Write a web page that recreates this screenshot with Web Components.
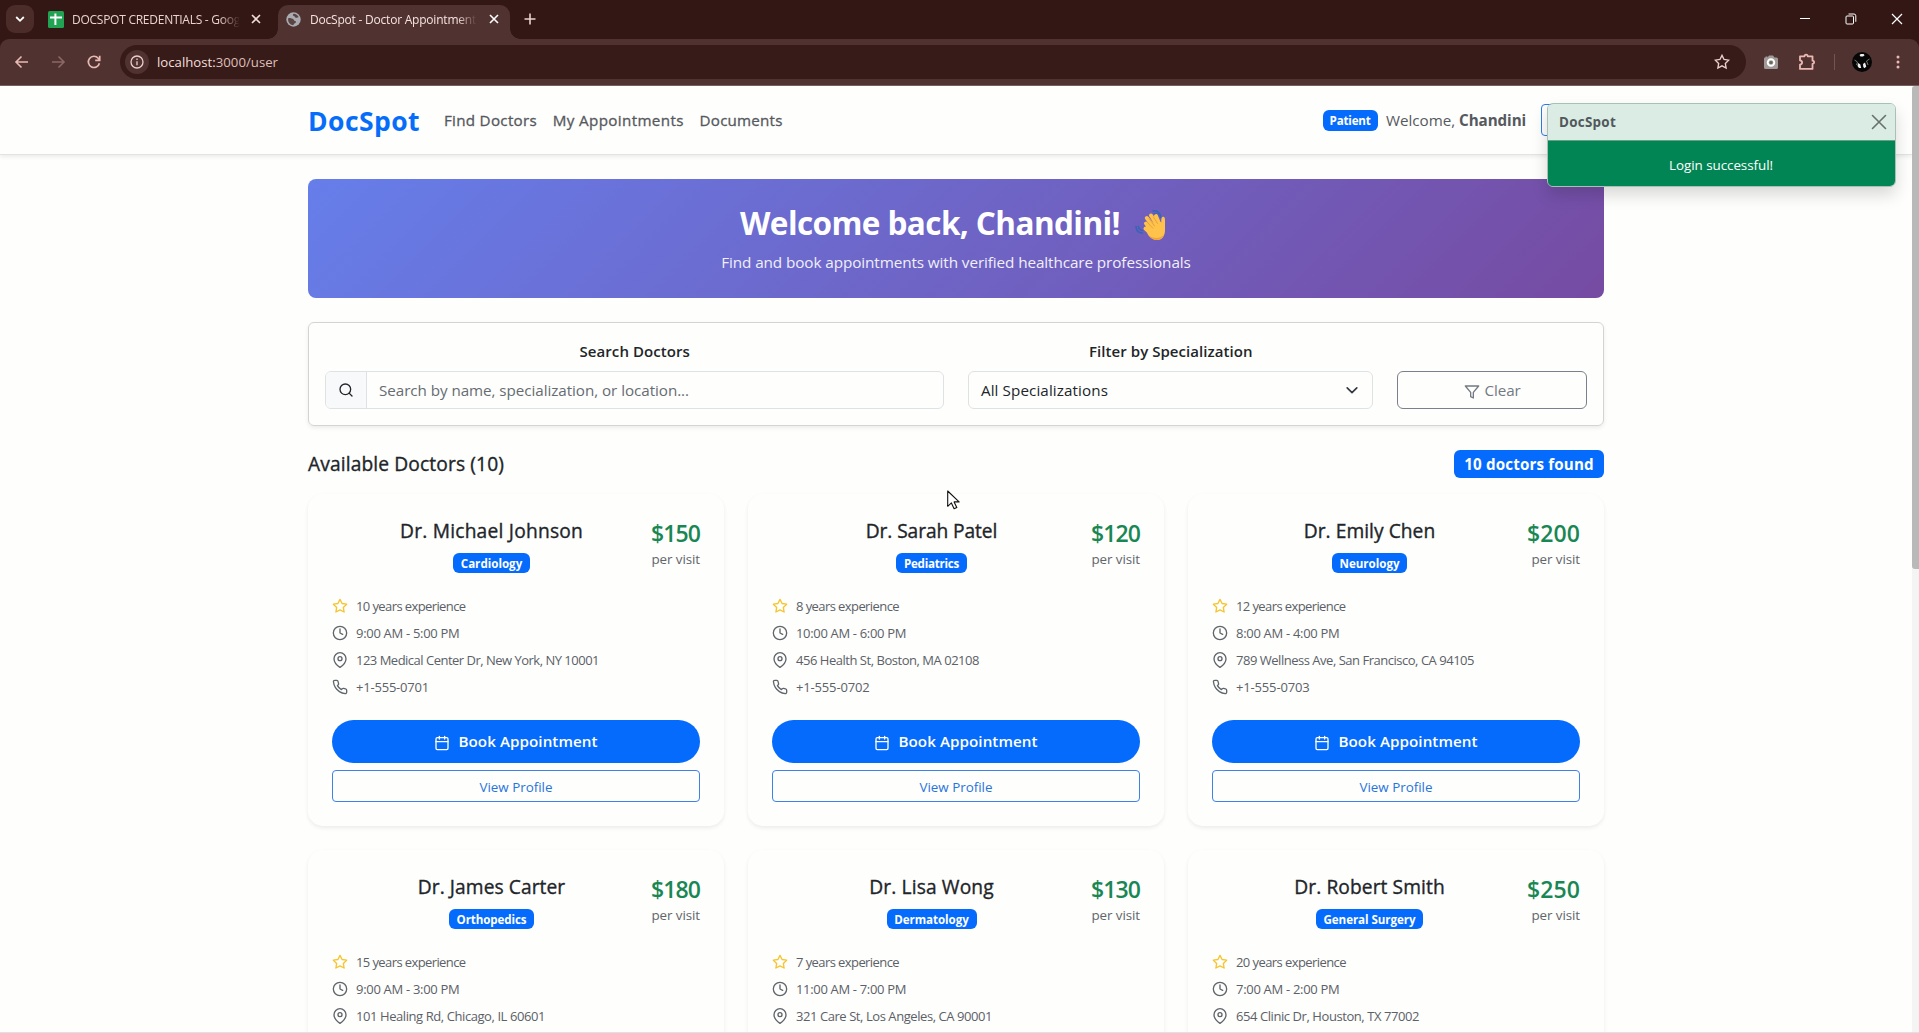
<!DOCTYPE html>
<html lang="en">
<head>
<meta charset="utf-8">
<title>DocSpot - Doctor Appointment</title>
<style>
html,body{margin:0;height:100%;overflow:hidden}
body{font-family:"Open Sans","Noto Sans",sans-serif;color:#212529;background:#fefefd}
</style>
</head>
<body>
<doc-app></doc-app>
<script>
const define=(name,css,html)=>customElements.define(name,class extends HTMLElement{
  constructor(){
    super();
    this.attachShadow({mode:'open'}).innerHTML=`<style>:host{box-sizing:border-box}*{box-sizing:border-box}svg{display:block;flex:none}${css}</style>`+(typeof html==='function'?html(this):html);
  }
});
const feather=(inner,size=16,color='currentColor',width=2)=>`<svg width="${size}" height="${size}" viewBox="0 0 24 24" fill="none" stroke="${color}" stroke-width="${width}" stroke-linecap="round" stroke-linejoin="round">${inner}</svg>`;
const STAR='<path d="M12 2l3.09 6.26L22 9.27l-5 4.87 1.18 6.88L12 17.77l-6.18 3.25L7 14.14 2 9.27l6.91-1.01z"/>';
const CLOCK='<circle cx="12" cy="12" r="10"/><path d="M12 6v6l4 2"/>';
const PIN='<path d="M21 10c0 7-9 13-9 13s-9-6-9-13a9 9 0 0 1 18 0z"/><circle cx="12" cy="10" r="3"/>';
const PHONE='<path d="M22 16.92v3a2 2 0 0 1-2.18 2 19.79 19.79 0 0 1-8.63-3.07 19.5 19.5 0 0 1-6-6 19.79 19.79 0 0 1-3.07-8.67A2 2 0 0 1 4.11 2h3a2 2 0 0 1 2 1.72c.127.96.361 1.903.7 2.81a2 2 0 0 1-.45 2.11L8.09 9.91a16 16 0 0 0 6 6l1.27-1.27a2 2 0 0 1 2.11-.45c.907.339 1.85.573 2.81.7A2 2 0 0 1 22 16.92z"/>';
const CAL='<rect x="3" y="4" width="18" height="18" rx="2"/><path d="M16 2v4M8 2v4M3 10h18"/>';

/* ---------- browser frame ---------- */
define('tab-strip',`
:host{display:flex;height:39px;background:#331714;color:#ead2ce;font-size:12px;padding:5px 0 0 6px}
.menu{width:28px;height:28px;border-radius:9px;background:#4b2c29;display:grid;place-items:center}
.tab{display:flex;align-items:center;height:28px;flex:none}
.one{width:213px;margin-left:14px}
.one svg.logo{margin-right:8px}
.txt{overflow:hidden;-webkit-mask-image:linear-gradient(90deg,#000 88%,transparent);white-space:nowrap;line-height:20px;padding-top:1px}
.two{position:relative;width:232px;height:34px;background:#503230;border-radius:10px 10px 0 0;margin-left:17px;padding:0 0 6px 8px;color:#f5e3e0}
.two:before,.two:after{content:"";position:absolute;bottom:0;width:10px;height:10px}
.two:before{left:-10px;background:radial-gradient(circle at 0 0,transparent 9.5px,#503230 10px)}
.two:after{right:-10px;background:radial-gradient(circle at 100% 0,transparent 9.5px,#503230 10px)}
.plus{margin:8px 0 0 14px}
.win{margin-left:auto;display:flex;gap:34px;padding:8px 16px 0 0;height:30px}
`,`
<div class="menu"><svg width="10" height="8" viewBox="0 0 10 8" fill="none" stroke="#fff" stroke-width="1.8"><path d="M1.2 2l3.8 3.8L8.8 2"/></svg></div>
<div class="tab one"><svg class="logo" width="16" height="17" viewBox="0 0 16 17"><rect width="16" height="17" rx="1.5" fill="#20a352"/><path d="M2 6.500h12M7.400 2.500v11.500" stroke="#fff" stroke-width="2"/></svg>
<div class="txt" style="width:168px"><fit-text w="168">DOCSPOT CREDENTIALS - Goog</fit-text></div>
<svg style="margin-left:11px" width="10" height="10" viewBox="0 0 10 10" stroke="#f0dcd8" stroke-width="1.600"><path d="M1 1l8 8M9 1l-8 8"/></svg></div>
<div class="tab two"><svg width="15" height="15" viewBox="0 0 15 15"><circle cx="7.500" cy="7.500" r="7.200" fill="#a9abb0"/><path d="M2.200 6.300c1.400-.6 3 .4 4.300.5 1.600.2 1.300 2.200 2.600 2.300 1.300.2 1 1.700-.1 2.200-.9.400-1.300 1-1.600 1.900-2.900 0-5.200-2.500-5.300-5.400zM7.500 1.700c-1 .9-.8 1.900.5 2.300 1.200.4.600 1.700 2 1.800 1.300.1 1.700-.6 2.700-.6-.9-2-2.800-3.500-5.200-3.500z" fill="#5b4544"/></svg>
<div class="txt" style="width:167px;margin-left:9px"><fit-text w="166">DocSpot - Doctor Appointment</fit-text></div>
<svg style="margin-left:12px" width="10" height="10" viewBox="0 0 10 10" stroke="#fff" stroke-width="1.600"><path d="M1 1l8 8M9 1l-8 8"/></svg></div>
<svg class="plus" width="12" height="12" viewBox="0 0 12 12" stroke="#ead2ce" stroke-width="1.600"><path d="M6 .5v11M.5 6h11"/></svg>
<div class="win"><svg width="12" height="12" viewBox="0 0 12 12" stroke="#fff"><path d="M1 5.500h10"/></svg>
<svg width="12" height="12" viewBox="0 0 12 12" stroke="#fff" fill="none"><rect x="1" y="3" width="7.500" height="8" rx="1"/><path d="M3.500 1h5.500a1.800 1.800 0 0 1 1.800 1.800v6"/></svg>
<svg width="12" height="12" viewBox="0 0 12 12" stroke="#fff" stroke-width="1.200"><path d="M1 1l10 10M11 1L1 11"/></svg></div>`);

define('tool-bar',`
:host{display:block;height:47px;background:#331714}
.bar{height:47px;background:#503230;border-radius:9px 9px 0 0;border-bottom:1px solid #76605e;display:flex;align-items:center;padding:0 19px 0 14px}
.nav{display:flex;gap:20px;width:106px}
.omni{height:34px;width:1626px;flex:none;border-radius:17px;background:#371b18;display:flex;align-items:center;padding:0 16px 0 5px;color:#f3dfdc;font-size:13.200px}
.info{width:24px;height:24px;border-radius:50%;background:#503230;display:grid;place-items:center;margin-right:8px}
.omni .s{margin-left:auto}
.right{display:flex;align-items:center;margin-left:auto}
`,`
<div class="bar"><div class="nav">
<svg width="16" height="16" viewBox="0 0 16 16" fill="none" stroke="#e9b9b3" stroke-width="1.600"><path d="M14 8H2M7.500 2.500L2 8l5.500 5.500"/></svg>
<svg width="16" height="16" viewBox="0 0 16 16" fill="none" stroke="#8c6864" stroke-width="1.600"><path d="M2 8h12M8.500 2.500L14 8l-5.500 5.500"/></svg>
<svg width="16" height="16" viewBox="0 0 16 16" fill="none" stroke="#e9b9b3" stroke-width="1.700"><path d="M13.400 9.200A5.600 5.600 0 1 1 12.200 4.200L13.500 6"/><path d="M13.700 1.800V6.300H9.200"/></svg>
</div><div class="omni"><div class="info"><svg width="14" height="14" viewBox="0 0 14 14" fill="none" stroke="#ecd0cc" stroke-width="1.300"><circle cx="7" cy="7" r="6"/><path d="M7 6.200V10.200M7 3.600V5"/></svg></div>
<fit-text w="121">localhost:<span style="color:#dfbfba">3000/user</span></fit-text>
<svg class="s" width="16" height="16" viewBox="0 0 24 24" fill="none" stroke="#ecd0cc" stroke-width="2">${STAR}</svg></div>
<div class="right"><svg width="16" height="16" viewBox="0 0 16 16"><path d="M1.500 3.500h1v-1h2v1L6 1.500h4L11.500 3.500h2A1.500 1.500 0 0 1 15 5v8.500a1.500 1.500 0 0 1-1.500 1.500h-11A1.500 1.500 0 0 1 1 13.500v-9z" fill="#a09a98"/><circle cx="8" cy="8.500" r="3.300" fill="none" stroke="#fff" stroke-width="1.900"/><circle cx="8" cy="8.500" r="1.500" fill="#665"/></svg>
<svg style="margin-left:19px" width="18" height="18" viewBox="0 0 18 18" fill="none" stroke="#eab9b4" stroke-width="1.800" stroke-linejoin="round"><path d="M2 3.300h4.500a1.600 1.600 0 0 1 3.200 0H14.500v4.400a1.600 1.600 0 0 1 0 3.200v5H2v-4.300c2.800-.4 2.800-3.800 0-4.200z"/></svg>
<div style="width:1px;height:16px;background:#76534f;margin-left:18px"></div>
<svg style="margin-left:17px" width="20" height="20" viewBox="0 0 20 20"><circle cx="10" cy="10" r="10" fill="#060606"/><path d="M7.500 3l1.400-1h2.700l1 1.300-1.600 1.200H8.500zM6 11l2.200 1.200 1 3.800H7l-1.500-2zM11 12l2-1.500 1.300 4-1.800 1.800-1.200-1.300z" fill="#eee"/><path d="M2.500 8l3 2-1 3M17.500 7l-3 2 1.500 4" stroke="#777" fill="none"/></svg>
<svg style="margin-left:24px" width="4" height="14" viewBox="0 0 4 14" fill="#eab9b4"><circle cx="2" cy="2" r="1.500"/><circle cx="2" cy="7" r="1.500"/><circle cx="2" cy="12" r="1.500"/></svg></div></div>`);

/* ---------- page ---------- */
define('blue-badge',`
:host{display:inline-flex;align-items:center;justify-content:center;background:#046bfc;color:#fff;font-weight:700;font-size:11.600px;border-radius:6px;height:20.500px;padding-top:1.500px;line-height:16px;flex:none}
`,`<slot></slot>`);

define('nav-bar',`
:host{display:flex;align-items:center;height:69px;padding:0 0 0 308px;border-bottom:1px solid #e2e4e4;box-shadow:0 2px 4px rgba(0,0,0,.075);color:#56595d}
.brand{font-weight:700;font-size:26.500px;color:#066dfa;width:136px;line-height:36px;padding-top:1px}
.links{display:flex;gap:15.800px;font-weight:500;font-size:15.200px;-webkit-text-stroke:.3px #56595d}
.user{display:flex;align-items:center;margin-left:540px;font-size:15.200px}
.out{width:100px;height:32px;margin-left:15px;border:1px solid #2f7ae8;border-radius:4px}
`,`
<div class="brand"><fit-text w="112">DocSpot</fit-text></div>
<div class="links"><fit-text w="93">Find Doctors</fit-text><fit-text w="131">My Appointments</fit-text><fit-text w="83">Documents</fit-text></div>
<div class="user"><blue-badge style="width:55px;margin-top:1px"><fit-text w="41">Patient</fit-text></blue-badge>
<fit-text w="69" style="margin-left:8.500px">Welcome,</fit-text><fit-text w="67" style="font-weight:700;margin-left:4px">Chandini</fit-text><div class="out"></div></div>`);

define('welcome-banner',`
:host{display:flex;flex-direction:column;align-items:center;height:118.500px;border-radius:8px;background:linear-gradient(135deg,#667eea 0%,#764ba2 100%);color:#fff;padding-top:23px}
.h{display:flex;align-items:center;font-weight:700;font-size:31.500px;line-height:42px;height:42px;padding-right:6px}
.s{font-size:15.300px;line-height:22px;margin-top:6.500px;color:#f0effa}
`,`
<div class="h"><fit-text w="380">Welcome back, Chandini!</fit-text>
<svg style="margin:3px 0 0 14px" width="32" height="33" viewBox="0 0 32 33" fill="none">
<path d="M19 3c3.500-1 7.500 1.500 7.500 6.500M20.500 5.500c2 0 3.500 1.200 3.700 3.500M2 18.500c.3 4 2.500 6.500 6.500 6.500M4.500 18.500c.3 2.300 1.700 3.800 4 4" stroke="#3565b4" stroke-width="1.600" stroke-linecap="round"/>
<path d="M12 15.500l7 8M12.800 10l8.200 10M17 7.500l6.500 10M22 8l3.500 9M11.500 20.500l7 6.500" stroke="#ffc24b" stroke-width="4" stroke-linecap="round"/>
<path d="M15 20l10-7 2.300 1.500c-.2-3 .1-5.500 1.500-5.800 1.700-.3 2.200 1.300 2.200 3.300v10c0 6-3 10-7.500 10-5 0-9.500-3.500-10.500-8z" fill="#ffc24b"/>
<path d="M13.500 14.500l5.300 5.700M15 10.500l5.500 7.500M19.500 9l4 6.500" stroke="#df9a38" stroke-width=".8" stroke-linecap="round"/><path d="M14.500 27c3.500 3.500 11.500 4.500 15.500-.5-1.200 3.700-3.800 5.500-7 5.500-3.500 0-6.500-2-8.500-5z" fill="#f2a43a"/></svg></div>
<div class="s"><fit-text w="469.500">Find and book appointments with verified healthcare professionals</fit-text></div>`);

define('search-panel',`
:host{display:flex;gap:24px;height:104px;border:1px solid #d3d5d5;border-radius:6px;box-shadow:0 2px 4px rgba(0,0,0,.075);padding:16px 16px 0;margin-top:24.500px}
.col{display:flex;flex-direction:column;align-items:stretch}
.lab{font-weight:600;font-size:15px;line-height:24px;height:32px;text-align:center}
.box{display:flex;align-items:center;height:38px;border:1px solid #dfe2e5;border-radius:6px;font-size:15.200px;overflow:hidden}
.ic{width:41px;height:38px;background:#f8f9fa;border-right:1px solid #dfe2e5;display:grid;place-items:center}
.clear{justify-content:center;gap:5px;border-color:#7a808c;color:#737a82;margin-top:32px}
`,`
<div class="col" style="width:620px"><div class="lab"><fit-text w="110.500">Search Doctors</fit-text></div>
<div class="box"><div class="ic">${feather('<circle cx="11" cy="11" r="8"/><path d="M21 21l-4.350-4.350"/>')}</div><fit-text w="310" style="color:#666c72;margin-left:12px">Search by name, specialization, or location...</fit-text></div></div>
<div class="col" style="width:405px"><div class="lab"><fit-text w="163.500">Filter by Specialization</fit-text></div>
<div class="box" style="padding:0 13px 0 11.500px;justify-content:space-between"><fit-text w="127">All Specializations</fit-text><svg width="14" height="14" viewBox="0 0 16 16" fill="none" stroke="#343a40" stroke-width="1.900" stroke-linecap="round" stroke-linejoin="round"><path d="M2.500 5.500l5.500 5.500 5.500-5.500"/></svg></div></div>
<div class="col" style="width:190px"><div class="box clear"><div style="padding-top:3px">${feather('<path d="M22 3H2l8 9.460V19l4 2v-8.540z"/>')}</div><fit-text w="36">Clear</fit-text></div></div>`);

define('result-head',`
:host{display:flex;justify-content:space-between;align-items:center;height:28px;margin:23.500px 0 16.500px}
blue-badge{width:150px;height:28px;font-size:15.200px;padding:0}
h2{margin:0;font-size:19.200px;line-height:24px;font-weight:500;-webkit-text-stroke:.35px currentColor;padding-top:1px}
`,`<h2><fit-text w="196">Available Doctors (10)</fit-text></h2><blue-badge><fit-text w="129.500">10 doctors found</fit-text></blue-badge>`);

define('detail-row',`
:host{display:flex;align-items:center;height:26.900px;gap:8px;font-size:13px;line-height:20px;color:#5b6167}
`,el=>({star:feather(STAR,16,'#f5c530'),clock:feather(CLOCK,16,'#5f656b'),pin:feather(PIN,16,'#5f656b'),phone:feather(PHONE,16,'#5f656b')})[el.getAttribute('icon')]+'<slot></slot>');

define('doctor-card',`
:host{display:block;width:416px;height:332px;border-radius:15px;box-shadow:0 2px 4px rgba(0,0,0,.075);padding:24px;flex:none}
.head{display:flex;height:75px}
.who{flex:1;display:flex;flex-direction:column;align-items:center}
.name{font-size:19.200px;font-weight:500;line-height:24px;padding-top:1px;height:34.500px;-webkit-text-stroke:.35px currentColor}
.fee{display:flex;flex-direction:column;align-items:flex-end;color:#5f656b;font-size:13.400px;line-height:20px}
.fee b{color:#198754;font-weight:600;font-size:23px;line-height:30px;height:30.500px}
.book{display:flex;align-items:center;justify-content:center;gap:8px;height:42.500px;border-radius:22px;background:#046bfc;color:#fff;font-weight:600;font-size:15.200px;margin-top:19.500px}
.view{display:flex;align-items:center;justify-content:center;height:32px;border:1px solid #3c82e8;border-radius:4px;margin-top:7.500px;padding-top:1px;color:#2874dc;font-size:13.400px}
`,el=>{const d=DOCTORS[el.getAttribute('doctor')];const f=p=>`<fit-text w="${p[1]}">${p[0]}</fit-text>`;
return `<div class="head"><div class="who"><div class="name">${f(d.name)}</div><blue-badge style="width:${d.spec[1]+15.5}px">${f(d.spec)}</blue-badge></div>
<div class="fee"><b>${f(d.fee)}</b><fit-text w="48.500">per visit</fit-text></div></div>
<detail-row icon="star">${f(d.exp)}</detail-row><detail-row icon="clock">${f(d.hours)}</detail-row><detail-row icon="pin">${f(d.addr)}</detail-row>${d.tel?`<detail-row icon="phone">${f(d.tel)}</detail-row>
<div class="book"><div style="padding-top:4px">${feather(CAL,16)}</div><fit-text w="139">Book Appointment</fit-text></div><div class="view"><fit-text w="73">View Profile</fit-text></div>`:''}`});
const DOCTORS=[
{name:['Dr. Michael Johnson',183],spec:['Cardiology',61.5],fee:['$150',49],exp:['10 years experience',109.5],hours:['9:00 AM - 5:00 PM',103.5],addr:['123 Medical Center Dr, New York, NY 10001',243],tel:['+1-555-0701',73]},
{name:['Dr. Sarah Patel',131.5],spec:['Pediatrics',55],fee:['$120',49],exp:['8 years experience',103],hours:['10:00 AM - 6:00 PM',110],addr:['456 Health St, Boston, MA 02108',183],tel:['+1-555-0702',73.5]},
{name:['Dr. Emily Chen',131.5],spec:['Neurology',60],fee:['$200',53],exp:['12 years experience',109.5],hours:['8:00 AM - 4:00 PM',103.5],addr:['789 Wellness Ave, San Francisco, CA 94105',238],tel:['+1-555-0703',73.5]},
{name:['Dr. James Carter',147.5],spec:['Orthopedics',70],fee:['$180',49],exp:['15 years experience',109.5],hours:['9:00 AM - 3:00 PM',103.5],addr:['101 Healing Rd, Chicago, IL 60601',189]},
{name:['Dr. Lisa Wong',124.5],spec:['Dermatology',74.5],fee:['$130',49],exp:['7 years experience',103],hours:['11:00 AM - 7:00 PM',110],addr:['321 Care St, Los Angeles, CA 90001',196]},
{name:['Dr. Robert Smith',150.5],spec:['General Surgery',92],fee:['$250',53],exp:['20 years experience',110],hours:['7:00 AM - 2:00 PM',103.5],addr:['654 Clinic Dr, Houston, TX 77002',183]}];

define('toast-note',`
:host{display:block;position:absolute;left:1546.500px;top:102.500px;width:349px;height:84px;border:1px solid #a9c1b5;border-radius:6px;box-shadow:0 8px 16px rgba(0,0,0,.15);overflow:hidden;font-size:13.400px;z-index:3}
.h{display:flex;align-items:center;justify-content:space-between;height:37.500px;background:#daece3;border-bottom:1px solid #63a284;padding:0 8px 0 11.500px;color:#51585b;font-weight:700}
.b{display:flex;align-items:center;justify-content:center;height:46px;padding-top:1px;background:#028554;color:#fff}
`,`<div class="h"><fit-text w="57">DocSpot</fit-text><svg width="16" height="16" viewBox="0 0 16 16" stroke="#68716d" stroke-width="1.600" stroke-linecap="round"><path d="M1.500 1.500l13 13M14.500 1.500l-13 13"/></svg></div><div class="b"><fit-text w="104">Login successful!</fit-text></div>`);

define('mouse-pointer',`:host{position:absolute;left:947px;top:490px;z-index:4}`,
`<svg width="13" height="20" viewBox="0 0 13 20"><path d="M.7 1v15.300l3.700-3.400 2.700 5.900 2.700-1.200-2.700-5.700h5z" fill="#fff" stroke="#111" stroke-width="1.100" stroke-linejoin="round"/></svg>`);

define('doc-app',`
:host{display:flex;flex-direction:column;position:relative;width:1919px;height:1033px;overflow:hidden}
.view{display:flex;height:947px;overflow:hidden;border-bottom:1px solid #dfe0e0}
.page{width:1912px;flex:none}
.main{width:1296px;margin:24px auto 0}
.grid{display:flex;flex-wrap:wrap;gap:24px}
.bar{width:7px;background:#f4f4f4}
.bar i{display:block;height:483px;background:#b9b9b9;border-radius:3px 0 0 3px}
`,`<tab-strip></tab-strip><tool-bar></tool-bar>
<div class="view"><div class="page"><nav-bar></nav-bar><div class="main"><welcome-banner></welcome-banner><search-panel></search-panel><result-head></result-head>
<div class="grid">${[0,1,2,3,4,5].map(i=>`<doctor-card doctor="${i}"></doctor-card>`).join('')}</div></div></div><div class="bar"><i></i></div></div>
<toast-note></toast-note><mouse-pointer></mouse-pointer>`);

/* Single-line label that tracks its letters so that it fills the width given in w. */
customElements.define('fit-text',class extends HTMLElement{
  constructor(){super();this.attachShadow({mode:'open'}).innerHTML='<style>:host{display:inline-block;white-space:nowrap;flex:none;font-kerning:normal;font-variant-ligatures:none}</style><slot></slot>'}
  connectedCallback(){
    const want=+this.getAttribute('w'),n=this.textContent.length;
    this.style.letterSpacing='0px';
    const have=this.getBoundingClientRect().width;
    if(have)this.style.letterSpacing=((want-have)/n).toFixed(3)+'px';
  }
});
</script>
</body>
</html>
